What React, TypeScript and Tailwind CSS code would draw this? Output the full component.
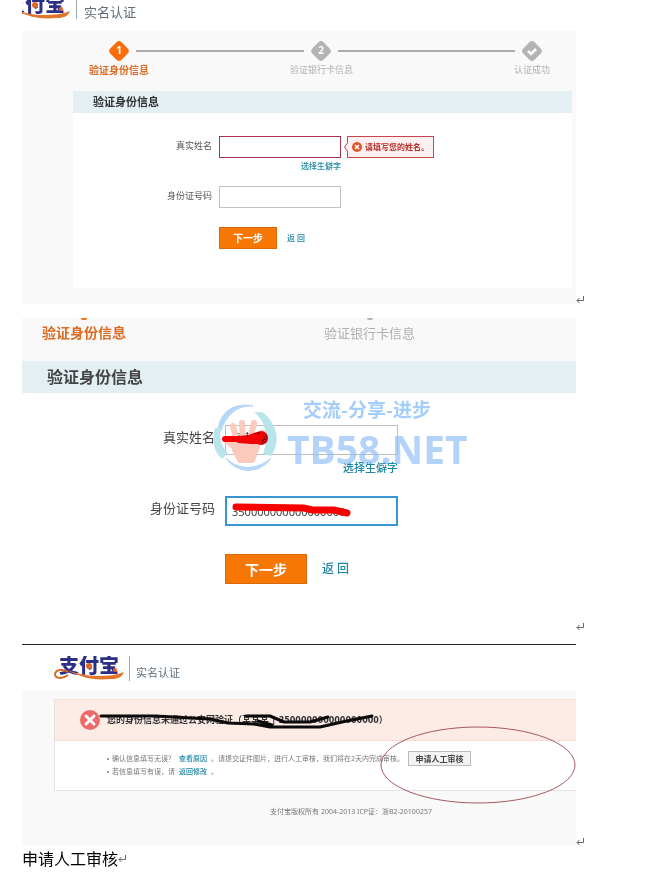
import type { ReactNode } from 'react';

const Logo = () => (
  <svg className="shrink-0" width="70" height="25" viewBox="0 0 70 25" role="img" aria-label="支付宝">
    <text
      x="5"
      y="17"
      fontSize="20"
      fontWeight="900"
      fill="#2c2f86"
      fontFamily='"Noto Sans CJK SC", sans-serif'
    >
      支付宝
    </text>
    <path
      d="M14 16C9 13 2 13 1 18c0 5 8 5 13 1"
      fill="none"
      stroke="#d9661f"
      strokeWidth="2"
    />
    <path d="M11 13C20 17 32 20 44 20c10 0 18-1 26-4-2 5-6 7-12 7-14 1-24 0-31-3-6-2-11-4-16-7z" fill="#e0742a" />
    <circle cx="35" cy="10" r="3" fill="#e0662a" />
    <circle cx="61" cy="14" r="2" fill="#e0662a" />
  </svg>
);

const ReturnMark = () => (
  <svg className="shrink-0" width="8" height="8" viewBox="0 0 8 8" aria-hidden="true">
    <path d="M7.5 0v4.5H1M3.5 2L1 4.5 3.5 7" fill="none" stroke="#666" strokeWidth="1" />
  </svg>
);

const Diamond = ({ active = false, children }: { active?: boolean; children: ReactNode }) => (
  <svg width="20" height="20" viewBox="0 0 20 20" aria-hidden="true">
    <rect x="2" y="2" width="16" height="16" rx="4" transform="rotate(45 10 10)" fill={active ? '#fb6d0b' : '#b3b3b3'} />
    {children}
  </svg>
);

const StepNumber = ({ value }: { value: string }) => (
  <text x="10" y="13" textAnchor="middle" fontSize="10" fontWeight="700" fill="#fff" fontFamily='"Noto Sans", sans-serif'>
    {value}
  </text>
);

const SmallForm = () => (
  <section className="bg-[#f9f9f9] pb-4">
    <div className="grid grid-cols-[60px_139fr_66px_157fr_40px] pt-[10px] pr-6 pl-[67px] whitespace-nowrap">
      <div className="flex flex-col items-center">
        <Diamond active>
          <StepNumber value="1" />
        </Diamond>
        <span className="mt-px text-[10px] leading-4 font-bold text-[#dd6a22]">验证身份信息</span>
      </div>
      <div className="mt-[9px] -mr-4 -ml-[13px] h-[2px] bg-[#ababab]" />
      <div className="flex flex-col items-center">
        <Diamond>
          <StepNumber value="2" />
        </Diamond>
        <span className="mt-px text-[9px] leading-4 text-[#b0b0b0]">验证银行卡信息</span>
      </div>
      <div className="mt-[9px] -mr-[3px] -ml-4 h-[2px] bg-[#ababab]" />
      <div className="flex flex-col items-center">
        <Diamond>
          <path d="M6 10l3 3 5-5" fill="none" stroke="#fff" strokeWidth="2.6" />
        </Diamond>
        <span className="mt-px text-[9px] leading-4 text-[#b0b0b0]">认证成功</span>
      </div>
    </div>

    <div className="mt-[13px] mr-1 ml-[51px] bg-white pb-[39px]">
      <h2 className="bg-[#e4eff4] pl-5 text-[11px] leading-[22px] font-bold text-[#333]">验证身份信息</h2>
      <form className="grid grid-cols-[139px_1fr] gap-x-[7px] pt-[23px] text-[9px] text-[#555]">
        <label htmlFor="name-empty" className="text-right leading-5">真实姓名</label>
        <div>
          <div className="flex">
            <input id="name-empty" className="h-[22px] w-[122px] border border-[#a8304c] px-1" />
            <div className="relative ml-[6px] flex h-[22px] items-center border border-[#c9454d] bg-[#fdf0f0] px-1 text-[8px] font-bold text-[#b5302c]">
              <svg className="absolute top-[5px] -left-1" width="4" height="10" viewBox="0 0 4 10" aria-hidden="true">
                <path d="M4 0L0.5 5 4 10" fill="#fdf0f0" stroke="#c9454d" />
              </svg>
              <svg className="mr-[3px]" width="10" height="10" viewBox="0 0 10 10" aria-hidden="true">
                <circle cx="5" cy="5" r="5" fill="#e2562c" />
                <path d="M3 3l4 4M7 3L3 7" stroke="#fff" strokeWidth="1.6" />
              </svg>
              请填写您的姓名。
            </div>
          </div>
          <div className="w-[122px] text-right">
            <a href="#" className="text-[8px] leading-4 font-medium text-[#1d86a5]">选择生僻字</a>
          </div>
        </div>
        <label htmlFor="id-empty" className="mt-3 text-right leading-5">身份证号码</label>
        <input id="id-empty" className="mt-3 h-[22px] w-[122px] border border-[#c2c2c2] px-1" />
        <div className="col-start-2 mt-[19px] flex items-center">
          <button type="button" className="h-[22px] w-[58px] border border-[#d9690a] bg-[#f77705] text-[10px] font-bold text-white">
            下一步
          </button>
          <a href="#" className="ml-[10px] text-[8px] font-medium text-[#1d86a5]">返 回</a>
        </div>
      </form>
    </div>
  </section>
);

const Watermark = () => (
  <svg
    className="pointer-events-none absolute top-[82px] left-[190px]"
    width="256"
    height="74"
    viewBox="0 0 256 74"
    aria-hidden="true"
  >
    <path d="M6 30C8 12 22 2 41 6 26 5 14 14 9 31z" fill="#b5d7f8" stroke="#b5d7f8" />
    <path d="M3 28C-1 40 2 52 10 59l6-6C9 46 7 38 9 28z" fill="#b9e4ec" />
    <path d="M42 12C52 20 58 34 51 54l8 2C70 40 64 22 50 12z" fill="#b9e4ec" />
    <path d="M14 58C26 70 44 71 59 58 48 75 24 74 14 58z" fill="#b5d7f8" stroke="#b5d7f8" />
    <g stroke="#fbcabd" strokeWidth="6" strokeLinecap="round">
      <path d="M25 42L21 26M31 40L30 23M38 40L42 23M44 46L51 33M26 50L14 40" fill="none" />
      <path d="M24 42h18l3 5-5 13H28l-5-10z" fill="#fbcabd" strokeLinejoin="round" />
    </g>
    <text
      x="91"
      y="17"
      fontSize="19"
      fontWeight="700"
      fill="#a5cdfa"
      fontFamily='"Noto Sans CJK SC", sans-serif'
    >
      交流-分享-进步
    </text>
    <text
      x="75"
      y="64"
      fontSize="39"
      fontWeight="700"
      fill="#8cbdf8"
      opacity="0.65"
      fontFamily='"Open Sans", sans-serif'
    >
      TB58.NET
    </text>
  </svg>
);

const LargeForm = () => (
  <section className="relative pb-[47px]">
    <div className="flex h-[43px] bg-[#f9f9f9] pl-5 whitespace-nowrap">
      <div className="flex flex-col items-center">
        <div className="h-[2px] w-[6px] rounded-b bg-[#fb6d0b]" />
        <span className="mt-[3px] text-[14px] leading-5 font-bold text-[#dd6a22]">验证身份信息</span>
      </div>
      <div className="ml-[198px] flex flex-col items-center">
        <div className="h-[2px] w-[6px] rounded-b bg-[#b3b3b3]" />
        <span className="mt-[3px] text-[13px] leading-5 text-[#b0b0b0]">验证银行卡信息</span>
      </div>
    </div>
    <h2 className="bg-[#e4eff4] pl-[25px] text-[16px] leading-8 font-bold text-[#444]">验证身份信息</h2>
    <form className="grid grid-cols-[193px_1fr] gap-x-[10px] pt-8 text-[13px] text-[#444]">
      <label htmlFor="name" className="text-right leading-6">真实姓名</label>
      <div className="w-[173px]">
        <div className="relative">
          <input id="name" defaultValue="某某某" className="block h-[30px] w-full border border-[#bdbdbd] px-[6px] pb-1 text-[12px]" />
          <svg className="absolute top-1 -left-1 z-10 mix-blend-multiply" width="50" height="20" viewBox="0 0 50 20" aria-hidden="true">
            <path d="M4 10h14l10-1 8-3M18 11l12 1 8 0" fill="none" stroke="#f70000" strokeWidth="6" strokeLinecap="round" />
            <circle cx="40" cy="9" r="7" fill="#f70000" />
          </svg>
        </div>
        <div className="text-right leading-6">
          <a href="#" className="text-[11px] font-medium text-[#1d86a5]">选择生僻字</a>
        </div>
      </div>
      <label htmlFor="id-number" className="mt-4 text-right leading-6">身份证号码</label>
      <div className="relative mt-4 w-[173px]">
        <input
          id="id-number"
          defaultValue="350000000000000000"
          className="block h-[30px] w-full border-2 border-[#3a96d2] px-[5px] text-[11px]"
        />
        <svg className="absolute top-[6px] left-1" width="126" height="16" viewBox="0 0 126 16" aria-hidden="true">
          <path d="M7 5l68 1 8 2 22 0 13 3" fill="none" stroke="#f70000" strokeWidth="7" strokeLinecap="round" />
        </svg>
      </div>
      <div className="col-start-2 mt-7 flex items-center">
        <button type="button" className="h-[30px] w-[82px] border border-[#d9690a] bg-[#f77705] text-[14px] font-bold text-white">
          下一步
        </button>
        <a href="#" className="ml-[15px] text-[12px] leading-4 font-medium text-[#1d86a5]">返 回</a>
      </div>
    </form>
    <Watermark />
  </section>
);

const ResultPanel = () => (
  <section className="relative border-t border-[#222]">
    <header className="flex h-[45px] pt-[11px] pl-8">
      <Logo />
      <div className="ml-[5px] h-[25px] w-px bg-[#9aa6ae]" />
      <h1 className="ml-[6px] pt-[9px] text-[11px] leading-4 text-[#5f6f7c]">实名认证</h1>
    </header>
    <div className="bg-[#f9f9f9] pt-[9px] pb-7 pl-8">
      <div className="border-b border-l border-[#e3e3e3] bg-white">
        <div className="relative flex h-[42px] items-center border-y border-[#f5ddd6] bg-[#fdebe6] pl-[25px]">
          <svg className="shrink-0" width="20" height="20" viewBox="0 0 20 20" aria-hidden="true">
            <circle cx="10" cy="10" r="10" fill="#ec6a6a" />
            <path d="M6 6l8 8M14 6l-8 8" stroke="#fff" strokeWidth="3" strokeLinecap="round" />
          </svg>
          <p className="ml-[7px] text-[9px] font-bold whitespace-nowrap text-[#333]">
            您的身份信息未通过公安网验证（某某某 | <span className="font-[DejaVu_Sans] text-[8px]">350000000000000000</span>）
          </p>
          <svg className="absolute top-[12px] left-[43px]" width="280" height="20" viewBox="0 0 280 20" aria-hidden="true">
            <path
              d="M3 4l54 0 55 3 18 4 26 1 16 3h50l22-5 30-6M148 4h24l14 6 26 0 18-5M160 9l14 4"
              fill="none"
              stroke="#0a0a0a"
              strokeWidth="3"
              strokeLinecap="round"
              strokeLinejoin="round"
            />
          </svg>
        </div>
        <ul className="pt-[10px] pb-3 pl-[52px] text-[7px] leading-3 whitespace-nowrap text-[#777]">
          <li className="flex items-center">
            <span className="mr-[3px] h-[2px] w-[2px] bg-[#999]" />
            确认信息填写无误？
            <a href="#" className="ml-1 font-medium text-[#1d86a5]">查看原因</a>
            <span className="ml-1">。请提交证件图片，进行人工审核，我们将在2天内完成审核。</span>
            <button type="button" className="ml-1 h-[15px] w-[63px] border border-[#bbb] bg-[#f3f3f3] text-[8px] leading-3 font-bold text-[#444]">
              申请人工审核
            </button>
          </li>
          <li className="flex items-center">
            <span className="mr-[3px] h-[2px] w-[2px] bg-[#999]" />
            若信息填写有误，请
            <a href="#" className="ml-1 font-medium text-[#1d86a5]">返回修改</a>
            <span className="ml-1">。</span>
          </li>
        </ul>
      </div>
      <footer className="mt-[15px] pl-[72px] text-center text-[7px] leading-3 text-[#777]">
        支付宝版权所有 2004-2013 ICP证：浙B2-20100257
      </footer>
    </div>
    <svg className="pointer-events-none absolute top-[81px] right-0" width="196" height="78" viewBox="0 0 196 78" aria-hidden="true">
      <ellipse cx="98" cy="39" rx="97" ry="38" fill="none" stroke="#a5595f" />
    </svg>
  </section>
);

export default function App() {
  return (
    <main className="bg-white pr-[83px] pl-[22px] font-['Noto_Sans','Noto_Sans_CJK_SC',sans-serif]">
      <header className="flex h-[31px]">
        <div className="flex h-[20px] w-12 items-end justify-end overflow-hidden">
          <Logo />
        </div>
        <div className="ml-[6px] h-[19px] w-px bg-[#9aa6ae]" />
        <h1 className="ml-[7px] pt-1 text-[13px] leading-4 text-[#5f6f7c]">实名认证</h1>
      </header>

      <div className="flex items-end">
        <div className="flex-1">
          <SmallForm />
        </div>
        <ReturnMark />
      </div>

      <div className="mt-[14px] flex items-end">
        <div className="flex-1">
          <LargeForm />
        </div>
        <ReturnMark />
      </div>

      <div className="mt-[13px] flex items-end">
        <div className="flex-1">
          <ResultPanel />
        </div>
        <ReturnMark />
      </div>

      <p className="mt-px flex items-center text-[16px] leading-6 text-black">
        申请人工审核
        <ReturnMark />
      </p>
    </main>
  );
}
